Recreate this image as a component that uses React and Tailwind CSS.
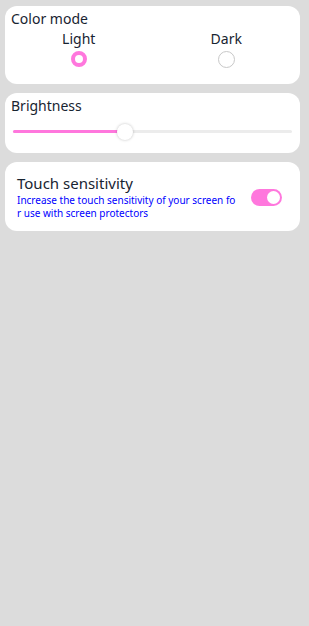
import React from "react";

export default function App() {
  return (
    <div
      className="w-[309px] h-[626px] bg-[#dcdcdc] pt-[6px] px-[5px] flex flex-col gap-[9px]"
      style={{ fontFamily: '"Noto Sans", "Open Sans", sans-serif' }}
    >
      {/* Color mode */}
      <div className="w-[295px] h-[78px] bg-white rounded-[12px] flex flex-col">
        <div className="pl-[6px] pt-[4px] text-[14px] leading-[18px] text-[#182431]">Color mode</div>
        <div className="flex mt-[2px]">
          <div className="flex-1 flex flex-col items-center">
            <div className="text-[14px] leading-[18px] text-[#182431]">Light</div>
            <div className="mt-[3px] w-[16px] h-[16px] rounded-full border-[4px] border-[#ff77dd]" />
          </div>
          <div className="flex-1 flex flex-col items-center">
            <div className="text-[14px] leading-[18px] text-[#182431]">Dark</div>
            <div className="mt-[3px] w-[17px] h-[17px] rounded-full border border-[#c8c8c8]" />
          </div>
        </div>
      </div>

      {/* Brightness */}
      <div className="w-[295px] h-[60px] bg-white rounded-[12px] flex flex-col">
        <div className="pl-[6px] pt-[4px] text-[14px] leading-[18px] text-[#182431]">Brightness</div>
        <div className="relative mx-[8px] mt-[15px] h-[3px] bg-[#ececec] rounded-full">
          <div className="absolute left-0 top-0 h-[3px] w-[112px] bg-[#ff77dd] rounded-full" />
          <div className="absolute left-[104px] top-[-6.5px] w-[16px] h-[16px] rounded-full bg-white shadow-[0_0_3px_rgba(0,0,0,0.25)]" />
        </div>
      </div>

      {/* Touch sensitivity */}
      <div className="w-[295px] h-[69px] bg-white rounded-[12px] flex items-center pl-[12px] pr-[18px]">
        <div className="flex-1 flex flex-col">
          <div className="text-[15px] leading-[19px] text-[#182431]">Touch sensitivity</div>
          <div className="w-[222px] mt-[1px] text-[10px] leading-[13px] text-[#0000ff] break-all">
            Increase the touch sensitivity of your screen for use with screen protectors
          </div>
        </div>
        <div className="w-[31px] h-[17px] rounded-full bg-[#ff77dd] flex items-center justify-end pr-[2px] mt-[2px]">
          <div className="w-[13px] h-[13px] rounded-full bg-white" />
        </div>
      </div>
    </div>
  );
}
